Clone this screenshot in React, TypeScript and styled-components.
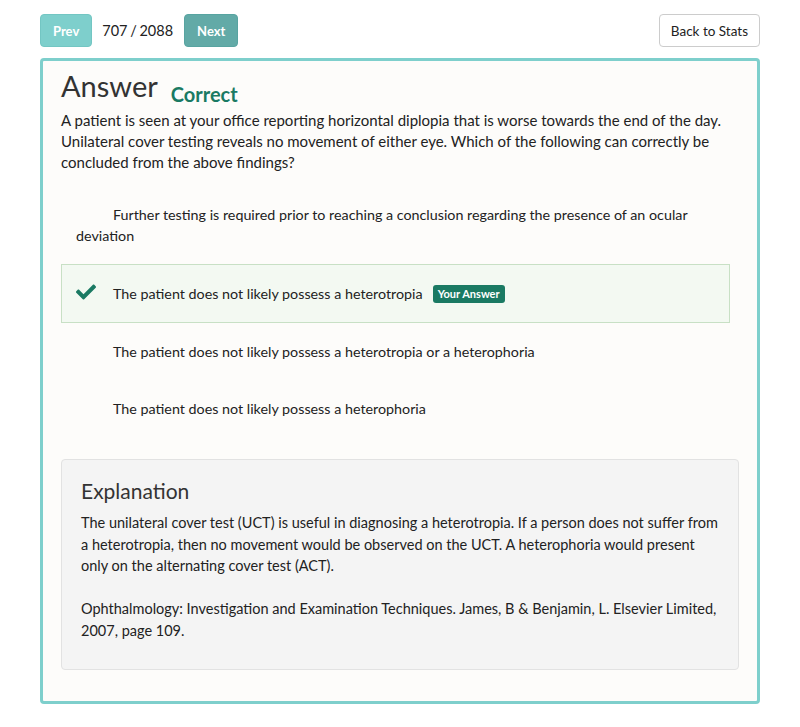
import React from 'react'
import styled, { createGlobalStyle } from 'styled-components'
import { FaCheck } from 'react-icons/fa'

const GlobalStyle = createGlobalStyle`
  body {
    margin: 0;
    background: #ffffff;
    font-family: Lato, 'Open Sans', sans-serif;
    color: #222;
  }
`

const Page = styled.div`
  padding: 14px 40px 24px;
`

const Toolbar = styled.div`
  display: flex;
  align-items: center;
  height: 33px;
  margin-bottom: 11px;
`

const NavButton = styled.button<{ $dark?: boolean }>`
  height: 33px;
  padding: 0 12px;
  border: 1px solid ${(p) => (p.$dark ? '#58a4a1' : '#73c6c3')};
  border-radius: 4px;
  background: ${(p) => (p.$dark ? '#62aaa7' : '#7ecfcc')};
  color: #fff;
  font-family: inherit;
  font-weight: 700;
  font-size: 13px;
`

const Counter = styled.span`
  margin: 0 11px 0 10px;
  font-size: 14.5px;
  word-spacing: -1px;
  color: #222;
`

const BackButton = styled.button`
  margin-left: auto;
  height: 33px;
  padding: 0 11px;
  border: 1px solid #ccc;
  border-radius: 4px;
  background: #fff;
  color: #222;
  font-family: inherit;
  font-size: 13.5px;
`

const Card = styled.div`
  border: 3px solid #7ecfcc;
  border-radius: 4px;
  background: #fdfcfa;
  padding: 7px 18px 31px;
`

const Heading = styled.div`
  display: flex;
  align-items: flex-end;
`

const Title = styled.h1`
  margin: 0;
  font-size: 29px;
  line-height: 36px;
  font-weight: 400;
  color: #333;
`

const Status = styled.span`
  margin-left: 13px;
  font-size: 20px;
  line-height: 20px;
  font-weight: 700;
  color: #1a7a63;
`

const Question = styled.p`
  margin: 6px 0 13px;
  font-size: 15px;
  line-height: 21px;
`

const Options = styled.div`
  margin-right: 9px;
`

const Option = styled.div<{ $selected?: boolean }>`
  padding: 17px 14px;
  font-size: 14.3px;
  line-height: 21px;
  border: 1px solid ${(p) => (p.$selected ? '#c8e0c5' : 'transparent')};
  background: ${(p) => (p.$selected ? '#f3f9f2' : 'transparent')};
`

const Mark = styled.span`
  display: inline-block;
  width: 22px;
  margin-right: 15px;
  color: #1a7a63;
  font-size: 20px;
  vertical-align: -3px;
`

const Badge = styled.span`
  display: inline-block;
  margin-left: 10px;
  padding: 2px 5px;
  border-radius: 3px;
  background: #1a7a63;
  color: #fff;
  font-size: 11px;
  font-weight: 700;
  line-height: 14px;
  vertical-align: 1px;
`

const Explanation = styled.div`
  margin-top: 22px;
  padding: 18px 19px 28px;
  background: #f4f4f4;
  border: 1px solid #e2e2e2;
  border-radius: 4px;
`

const ExplanationTitle = styled.h2`
  margin: 0 0 9px;
  font-size: 21px;
  line-height: 25px;
  font-weight: 400;
  color: #333;
`

const Paragraph = styled.p`
  margin: 0 0 21.5px;
  font-size: 14.5px;
  line-height: 21.5px;
  &:last-child {
    margin-bottom: 0;
  }
`

const options = [
  {
    text: 'Further testing is required prior to reaching a conclusion regarding the presence of an ocular deviation',
  },
  { text: 'The patient does not likely possess a heterotropia', selected: true },
  { text: 'The patient does not likely possess a heterotropia or a heterophoria' },
  { text: 'The patient does not likely possess a heterophoria' },
]

function App() {
  return (
    <Page>
      <GlobalStyle />
      <Toolbar>
        <NavButton>Prev</NavButton>
        <Counter>707 / 2088</Counter>
        <NavButton $dark>Next</NavButton>
        <BackButton>Back to Stats</BackButton>
      </Toolbar>
      <Card>
        <Heading>
          <Title>Answer</Title>
          <Status>Correct</Status>
        </Heading>
        <Question>
          A patient is seen at your office reporting horizontal diplopia that is worse towards the end of the
          day. Unilateral cover testing reveals no movement of either eye. Which of the following can correctly
          be concluded from the above findings?
        </Question>
        <Options>
          {options.map((o) => (
            <Option key={o.text} $selected={o.selected}>
              <Mark>{o.selected && <FaCheck />}</Mark>
              {o.text}
              {o.selected && <Badge>Your Answer</Badge>}
            </Option>
          ))}
        </Options>
        <Explanation>
          <ExplanationTitle>Explanation</ExplanationTitle>
          <Paragraph>
            The unilateral cover test (UCT) is useful in diagnosing a heterotropia. If a person does not suffer
            from a heterotropia, then no movement would be observed on the UCT. A heterophoria would present
            only on the alternating cover test (ACT).
          </Paragraph>
          <Paragraph>
            Ophthalmology: Investigation and Examination Techniques. James, B &amp; Benjamin, L. Elsevier
            Limited, 2007, page 109.
          </Paragraph>
        </Explanation>
      </Card>
    </Page>
  )
}

export default App
